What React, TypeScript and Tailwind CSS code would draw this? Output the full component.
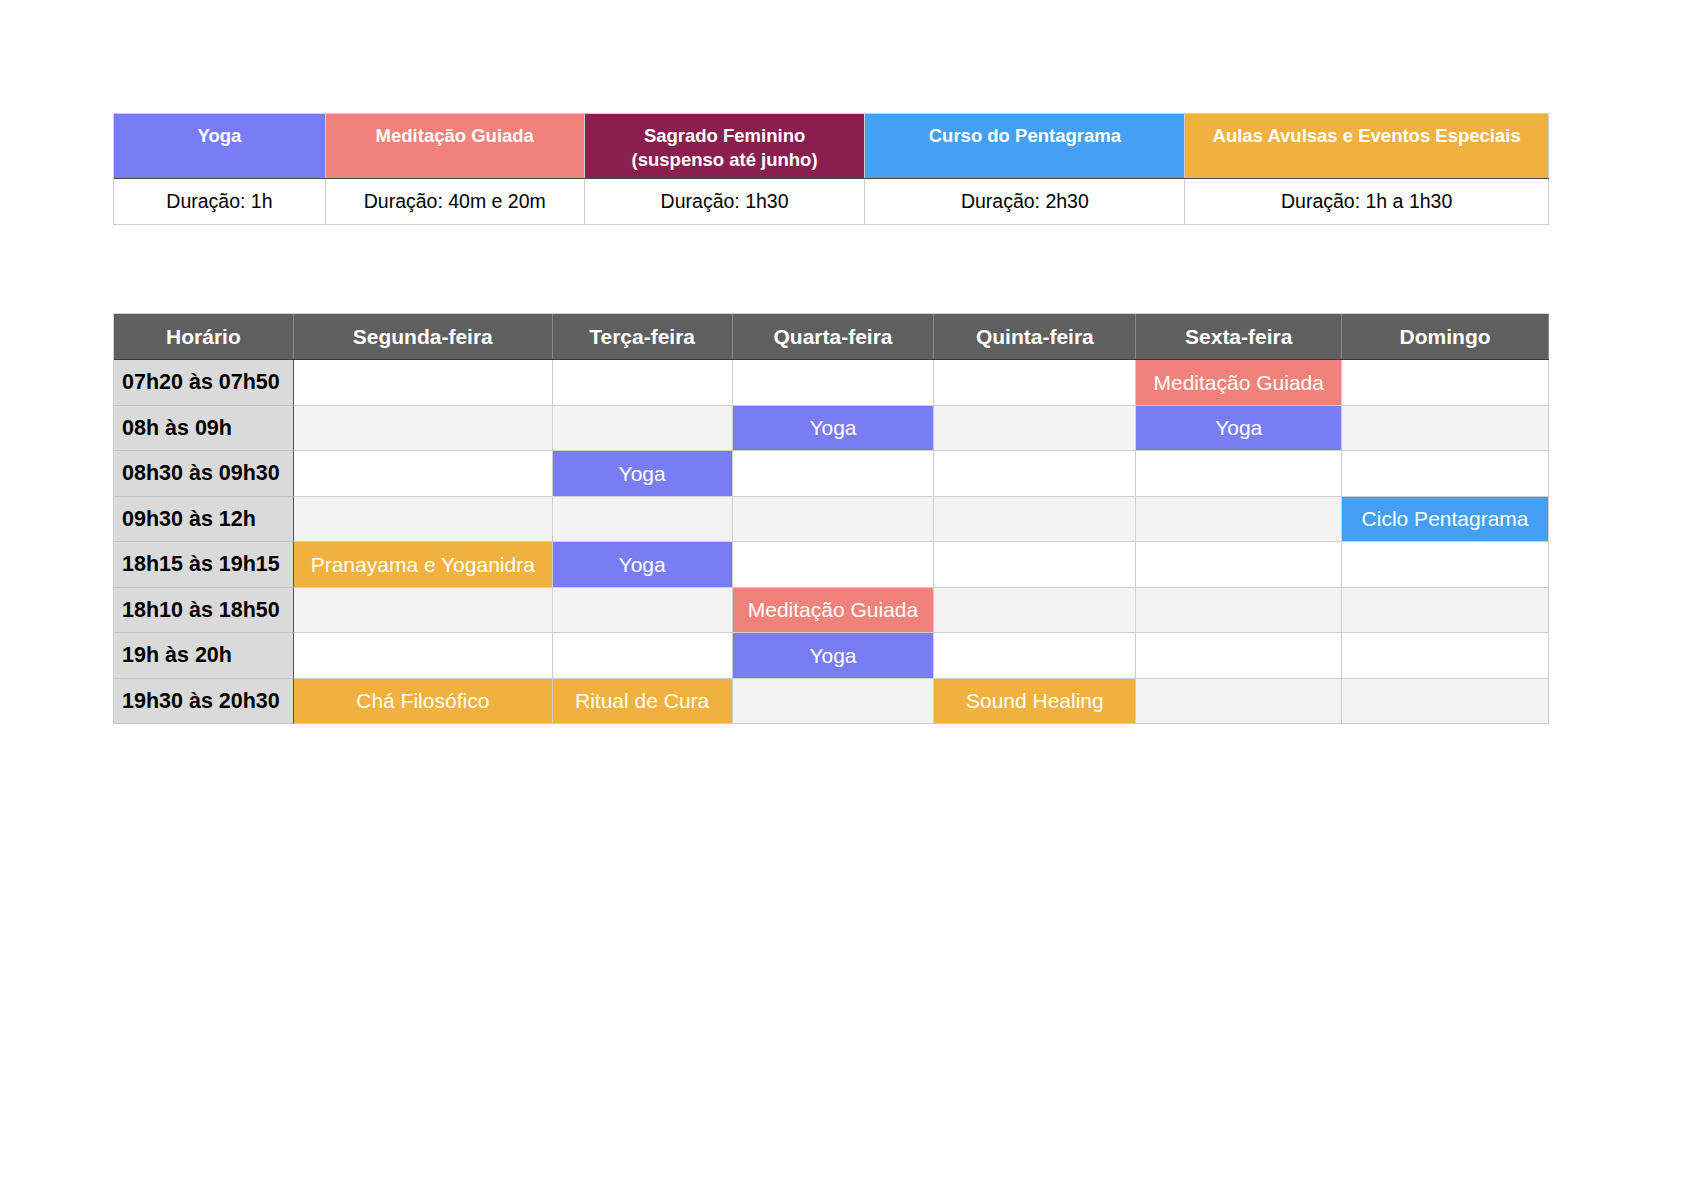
const YOGA = "bg-[#787df3]";
const MED = "bg-[#ef827a]";
const PENTA = "bg-[#459ff2]";
const AULAS = "bg-[#f0b13f]";

type Slot = { label: string; color: string } | null;

const legend = [
  { title: ["Yoga"], color: YOGA, duration: "Duração: 1h", w: "w-[212px]" },
  { title: ["Meditação Guiada"], color: MED, duration: "Duração: 40m e 20m", w: "w-[259px]" },
  {
    title: ["Sagrado Feminino", "(suspenso até junho)"],
    color: "bg-[#8a1f4f]",
    duration: "Duração: 1h30",
    w: "w-[281px]",
  },
  { title: ["Curso do Pentagrama"], color: PENTA, duration: "Duração: 2h30", w: "w-[320px]" },
  {
    title: ["Aulas Avulsas e Eventos Especiais"],
    color: AULAS,
    duration: "Duração: 1h a 1h30",
    w: "w-[364px]",
  },
];

const days = ["Segunda-feira", "Terça-feira", "Quarta-feira", "Quinta-feira", "Sexta-feira", "Domingo"];
const dayWidths = ["w-[259px]", "w-[180px]", "w-[202px]", "w-[202px]", "w-[206px]", "w-[207px]"];

const y = (label: string) => ({ label, color: YOGA });
const m = (label: string) => ({ label, color: MED });
const o = (label: string) => ({ label, color: AULAS });

const rows: { time: string; slots: Slot[] }[] = [
  { time: "07h20 às 07h50", slots: [null, null, null, null, m("Meditação Guiada"), null] },
  { time: "08h às 09h", slots: [null, null, y("Yoga"), null, y("Yoga"), null] },
  { time: "08h30 às 09h30", slots: [null, y("Yoga"), null, null, null, null] },
  { time: "09h30 às 12h", slots: [null, null, null, null, null, { label: "Ciclo Pentagrama", color: PENTA }] },
  { time: "18h15 às 19h15", slots: [o("Pranayama e Yoganidra"), y("Yoga"), null, null, null, null] },
  { time: "18h10 às 18h50", slots: [null, null, m("Meditação Guiada"), null, null, null] },
  { time: "19h às 20h", slots: [null, null, y("Yoga"), null, null, null] },
  { time: "19h30 às 20h30", slots: [o("Chá Filosófico"), o("Ritual de Cura"), null, o("Sound Healing"), null, null] },
];

export default function App() {
  return (
    <div className="min-h-[1190px] w-[1684px] bg-white pl-[113px] pt-[113px] font-['Liberation_Sans',Arial,sans-serif]">
      {/* Legend */}
      <div className="flex w-[1436px] flex-col border-l border-t border-[#cfcfcf]">
        <div className="flex h-[65px] border-b border-[#4a4a4a]">
          {legend.map((l) => (
            <div
              key={l.duration}
              className={`${l.w} ${l.color} flex flex-col items-center border-r border-[#cfcfcf] pt-[10px] text-[18.5px] font-bold leading-[24px] text-white`}
            >
              {l.title.map((t) => (
                <span key={t}>{t}</span>
              ))}
            </div>
          ))}
        </div>
        <div className="flex h-[46px]">
          {legend.map((l) => (
            <div
              key={l.duration}
              className={`${l.w} flex items-center justify-center border-b border-r border-[#cfcfcf] text-[19.5px] text-black`}
            >
              {l.duration}
            </div>
          ))}
        </div>
      </div>

      {/* Schedule */}
      <div className="mt-[88px] flex w-[1436px] flex-col border-l border-t border-[#cfcfcf]">
        <div className="flex h-[46px] border-b border-[#3a3a3a] bg-[#5f5f5f]">
          <div className="flex w-[180px] items-center justify-center border-r border-[#8a8a8a] text-[21px] font-bold text-white">
            Horário
          </div>
          {days.map((d, i) => (
            <div
              key={d}
              className={`${dayWidths[i]} flex items-center justify-center border-r border-[#8a8a8a] text-[21px] font-bold text-white`}
            >
              {d}
            </div>
          ))}
        </div>
        {rows.map((r, ri) => (
          <div key={r.time} className={`flex h-[45.5px] ${ri % 2 === 0 ? "bg-white" : "bg-[#f3f3f3]"}`}>
            <div className="flex w-[180px] items-center border-b border-r border-b-[#c4c4c4] border-r-[#555555] bg-[#dadada] pl-2 text-[21.5px] font-bold text-black">
              {r.time}
            </div>
            {r.slots.map((s, si) => (
              <div
                key={si}
                className={`${dayWidths[si]} ${s ? s.color : ""} flex items-center justify-center border-b border-r border-[#cfcfcf] text-[21px] text-white`}
              >
                {s?.label}
              </div>
            ))}
          </div>
        ))}
      </div>
    </div>
  );
}
